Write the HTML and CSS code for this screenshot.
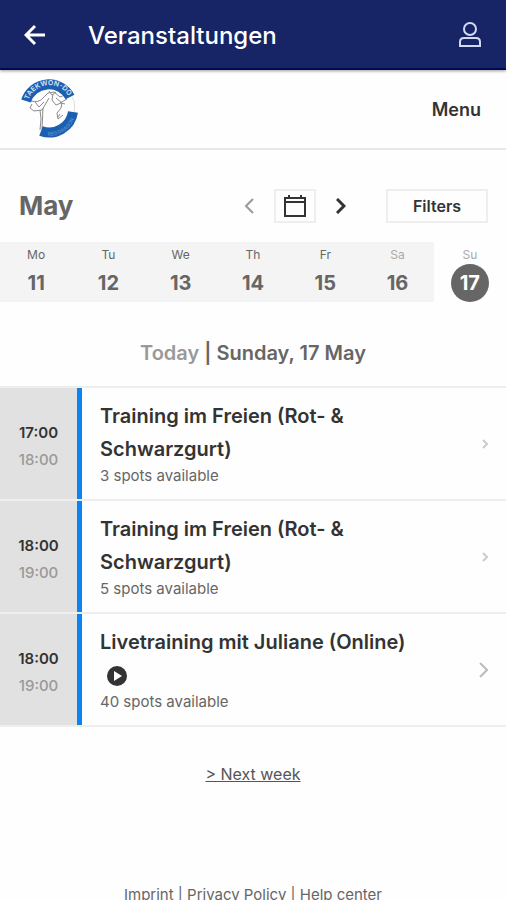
FILE: index.html
```html
<!DOCTYPE html>
<html lang="de">
<head>
  <meta charset="UTF-8">
  <meta name="viewport" content="width=device-width, initial-scale=1">
  <title>Veranstaltungen</title>
  <link rel="stylesheet" href="styles.css">
</head>
<body>
  <header class="appbar">
    <button type="button" class="icon-button" aria-label="Back">
      <svg width="22" height="22" viewBox="0 0 22 22"><path d="M21 11H2M11 2L2 11l9 9"/></svg>
    </button>
    <h1>Veranstaltungen</h1>
    <button type="button" class="icon-button account" aria-label="Account">
      <svg width="24" height="28" viewBox="0 0 24 28"><circle cx="12" cy="8" r="6"/><path d="M2 25v-4q0-4 4-4h12q4 0 4 4v4z"/></svg>
    </button>
  </header>

  <div class="site-header">
    <a href="#" class="logo" aria-label="Home">
      <svg width="70" height="70" viewBox="0 0 70 70">
        <path class="figure" d="M16 27q8 2 12-3l5-5 6-1 6 5 5-2M17 30l-2 4 4 3 8-1 3-5 4-7M20 28l4 5 5-5M25 36l1 9-1 11M28 34l-1 21M38 20l-1 6 4 5 5-2 4 1M41 24l6 5-1 5-4 5 1 6 5-4M45 29l7-4M34 17l3 4 4-3M45 40l-2 3"/>
        <path class="ring" d="M57 23q4 6 2 16"/>
        <path class="band" d="M11 27A24 24 0 0 1 55 23"/>
        <path class="band" d="M58 38A24 24 0 0 1 26 57"/>
        <path id="top-arc" class="guide" d="M13 28A22 22 0 0 1 56 29"/>
        <path id="low-arc" class="guide" d="M25 60A27 27 0 0 0 61 39"/>
        <text class="band-text"><textPath href="#top-arc" startOffset="2">TAEKWON-DO</textPath></text>
        <text class="band-text low"><textPath href="#low-arc" startOffset="8">RED DRAGON</textPath></text>
      </svg>
    </a>
    <button type="button" class="menu">Menu</button>
  </div>

  <main>
    <div class="toolbar">
      <h2>May</h2>
      <button type="button" class="step prev" aria-label="Previous week">
        <svg width="10" height="16" viewBox="0 0 10 16"><path d="M9 1L2 8l7 7"/></svg>
      </button>
      <button type="button" class="box calendar" aria-label="Choose a date">
        <svg width="22" height="22" viewBox="0 0 22 22"><path d="M1 3h20v18H1zM1 7h20M5 0v3M17 0v3"/></svg>
      </button>
      <button type="button" class="step next" aria-label="Next week">
        <svg width="10" height="16" viewBox="0 0 10 16"><path d="M1 1l7 7-7 7"/></svg>
      </button>
      <button type="button" class="box filters">Filters</button>
    </div>

    <div class="week">
      <button type="button" class="day"><span>Mo</span><b>11</b></button>
      <button type="button" class="day"><span>Tu</span><b>12</b></button>
      <button type="button" class="day"><span>We</span><b>13</b></button>
      <button type="button" class="day"><span>Th</span><b>14</b></button>
      <button type="button" class="day"><span>Fr</span><b>15</b></button>
      <button type="button" class="day weekend"><span>Sa</span><b>16</b></button>
      <button type="button" class="day weekend selected"><span>Su</span><b>17</b></button>
    </div>

    <h3 class="date"><span>Today</span> | Sunday, 17 May</h3>

    <div class="events">
      <a href="#" class="event">
        <div class="time"><b>17:00</b><span>18:00</span></div>
        <div class="info">
          <div class="name">Training im Freien (Rot- &amp; Schwarzgurt)</div>
          <div class="spots">3 spots available</div>
        </div>
        <svg class="arrow small" width="6" height="10" viewBox="0 0 6 10"><path d="M1 1l4 4-4 4"/></svg>
      </a>
      <a href="#" class="event">
        <div class="time"><b>18:00</b><span>19:00</span></div>
        <div class="info">
          <div class="name">Training im Freien (Rot- &amp; Schwarzgurt)</div>
          <div class="spots">5 spots available</div>
        </div>
        <svg class="arrow small" width="6" height="10" viewBox="0 0 6 10"><path d="M1 1l4 4-4 4"/></svg>
      </a>
      <a href="#" class="event">
        <div class="time"><b>18:00</b><span>19:00</span></div>
        <div class="info">
          <div class="name">Livetraining mit Juliane (Online)</div>
          <div class="online">
            <svg width="20" height="20" viewBox="0 0 20 20"><circle cx="10" cy="10" r="10"/><path d="M7 5l8 5-8 5z"/></svg>
          </div>
          <div class="spots">40 spots available</div>
        </div>
        <svg class="arrow" width="9" height="16" viewBox="0 0 9 16"><path d="M1 1l7 7-7 7"/></svg>
      </a>
    </div>

    <a href="#" class="next-week">&gt; Next week</a>
  </main>

  <footer>
    <a href="#">Imprint</a> | <a href="#">Privacy Policy</a> | <a href="#">Help center</a>
  </footer>
</body>
</html>
```
FILE: styles.css
```css
* {
  box-sizing: border-box;
}
body {
  margin: 0;
  background: #fefefe;
  color: #333;
  font-family: Inter, "Liberation Sans", sans-serif;
}
h1, h2, h3 {
  margin: 0;
}
button {
  padding: 0;
  border: 0;
  background: none;
  color: inherit;
  font: inherit;
  cursor: pointer;
}
a {
  color: inherit;
  text-decoration: none;
}
svg {
  display: block;
  fill: none;
  stroke: currentColor;
}
.appbar {
  display: flex;
  align-items: center;
  height: 70px;
  padding: 2px 24px 0;
  border-bottom: 2px solid #040852;
  background: #172566;
  color: #fff;
  box-shadow: 0 1px 3px rgba(0, 0, 0, 0.4);
}
.appbar h1 {
  flex: 1;
  margin-left: 42px;
  font-size: 24px;
  font-weight: 500;
}
.icon-button svg {
  stroke-width: 3;
}
.account {
  color: #d3d9f2;
}
.account svg {
  stroke-width: 2;
}
.site-header {
  display: flex;
  align-items: center;
  justify-content: space-between;
  height: 80px;
  padding: 0 25px 0 15px;
  border-bottom: 2px solid #e8e8e8;
}
.logo .figure {
  stroke: #8c8c8c;
}
.logo .ring {
  stroke: #ddd;
}
.logo .band {
  stroke: #1c5fb0;
  stroke-width: 10;
}
.logo .guide {
  stroke: none;
}
.band-text {
  fill: #c5dcf5;
  stroke: none;
  font-size: 7px;
  font-weight: 700;
}
.band-text.low {
  fill: #4b86cb;
  font-size: 5px;
}
.menu {
  font-size: 18px;
  font-weight: 600;
}
.toolbar {
  display: flex;
  align-items: center;
  padding: 39px 18px 19px 19px;
}
.toolbar h2 {
  flex: 1;
  color: #666;
  font-size: 26px;
  line-height: 34px;
}
.step svg {
  stroke-width: 3;
}
.prev {
  color: #999;
}
.prev svg {
  stroke-width: 2;
}
.box {
  display: flex;
  align-items: center;
  justify-content: center;
  height: 34px;
  border: 2px solid #eee;
}
.calendar {
  width: 42px;
  margin: 0 20px;
}
.calendar svg {
  stroke-width: 2;
}
.filters {
  width: 102px;
  margin-left: 40px;
  font-size: 16px;
  font-weight: 600;
}
.week {
  display: grid;
  grid-template-columns: repeat(7, 1fr);
}
.day {
  display: flex;
  flex-direction: column;
  align-items: center;
  height: 60px;
  padding-top: 4px;
  background: #f4f4f4;
  color: #666;
}
.day span {
  font-size: 12px;
  line-height: 18px;
}
.day b {
  width: 38px;
  font-size: 20px;
  line-height: 38px;
}
.weekend span {
  color: #aaa;
}
.selected {
  background: none;
}
.selected b {
  border-radius: 50%;
  background: #666;
  color: #fff;
}
.date {
  padding: 38px 0 20px;
  color: #666;
  font-size: 20px;
  font-weight: 600;
  line-height: 26px;
  text-align: center;
}
.date span {
  color: #999;
}
.events {
  border-top: 2px solid #eee;
}
.event {
  display: flex;
  align-items: center;
  border-bottom: 2px solid #eee;
}
.time {
  display: flex;
  flex-direction: column;
  align-self: stretch;
  justify-content: center;
  align-items: center;
  width: 82px;
  padding-top: 4px;
  border-right: 5px solid #0a84f5;
  background: #e1e1e1;
  font-size: 15px;
  font-weight: 500;
  line-height: 27px;
}
.time b {
  font-weight: 600;
}
.time span {
  color: #999;
}
.info {
  flex: 1;
  padding: 12px 40px 13px 18px;
}
.name {
  font-size: 20px;
  font-weight: 600;
  line-height: 33px;
}
.online {
  display: flex;
  align-items: center;
  height: 33px;
  padding-left: 7px;
}
.online circle {
  fill: #333;
  stroke: none;
}
.online path {
  fill: #fff;
  stroke: none;
}
.spots {
  color: #666;
  font-size: 15px;
  line-height: 20px;
}
.arrow {
  margin-right: 18px;
  color: #bbb;
  stroke-width: 2;
}
.arrow.small {
  color: #ccc;
}
.next-week {
  display: block;
  width: fit-content;
  margin: 35px auto 0;
  color: #555;
  font-size: 16px;
  line-height: 24px;
  text-decoration: underline;
}
footer {
  margin-top: 97px;
  color: #666;
  font-size: 15px;
  line-height: 24px;
  text-align: center;
}
```
